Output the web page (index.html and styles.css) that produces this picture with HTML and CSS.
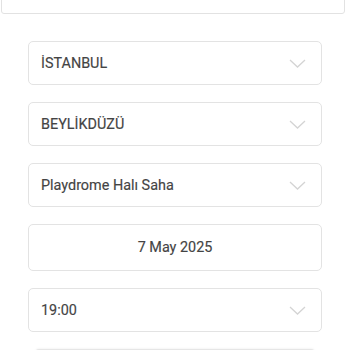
FILE: index.html
```html
<!DOCTYPE html>
<html>
<head>
<meta charset="utf-8">
<link rel="stylesheet" href="styles.css">
</head>
<body>
<div class="top-box"></div>
<div class="form">
  <div class="field select"><span class="label">İSTANBUL</span><svg class="chev" viewBox="0 0 17 9"><path d="M1 1 L8.5 8 L16 1" /></svg></div>
  <div class="field select"><span class="label">BEYLİKDÜZÜ</span><svg class="chev" viewBox="0 0 17 9"><path d="M1 1 L8.5 8 L16 1" /></svg></div>
  <div class="field select"><span class="label">Playdrome Halı Saha</span><svg class="chev" viewBox="0 0 17 9"><path d="M1 1 L8.5 8 L16 1" /></svg></div>
  <div class="field date"><span class="label">7 May 2025</span></div>
  <div class="field select"><span class="label">19:00</span><svg class="chev" viewBox="0 0 17 9"><path d="M1 1 L8.5 8 L16 1" /></svg></div>
  <div class="button-top"></div>
</div>
</body>
</html>
```
FILE: styles.css
```css
html, body {
  margin: 0;
  padding: 0;
  background: #ffffff;
  font-family: Roboto, "Liberation Sans", sans-serif;
}
.top-box {
  margin: -10px 5px 0 1px;
  height: 22px;
  border: 1px solid #e2e2e2;
  border-radius: 3px;
}
.form {
  display: flex;
  flex-direction: column;
  gap: 17px;
  padding: 27px 28px 0 28px;
}
.field {
  box-sizing: border-box;
  height: 44px;
  border: 1px solid #e3e3e3;
  border-radius: 5px;
  display: flex;
  align-items: center;
  padding: 0 15px 0 12px;
  font-size: 14.4px;
  color: #444444;
}
.label {
  -webkit-text-stroke: 0.15px #444444;
}
.field.select {
  justify-content: space-between;
}
.field.date {
  height: 47px;
  justify-content: center;
  padding: 0;
}
.chev {
  width: 17px;
  height: 9px;
  fill: none;
  stroke: #d4d4d4;
  stroke-width: 1.3;
}
.button-top {
  margin: 0 7px;
  height: 10px;
  border-top: 1px solid #e6e6e6;
  border-radius: 4px 4px 0 0;
  box-shadow: 0 -1px 2px rgba(0,0,0,0.04);
}
```
